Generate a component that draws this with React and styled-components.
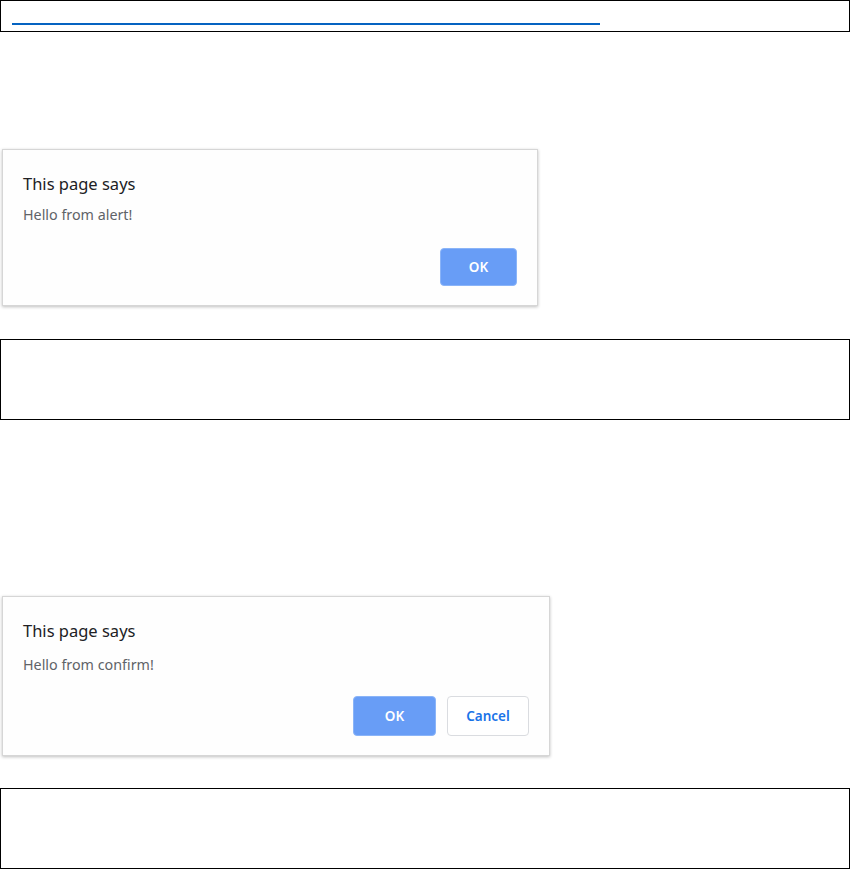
import React from 'react';
import styled, { createGlobalStyle } from 'styled-components';

const Global = createGlobalStyle`
  html, body {
    margin: 0;
    padding: 0;
    background: #ffffff;
  }
  body {
    font-family: "Segoe UI", "Noto Sans", "Open Sans", sans-serif;
  }
`;

const Page = styled.div`
  width: 850px;
  display: flex;
  flex-direction: column;
`;

const Frame = styled.div`
  box-sizing: border-box;
  width: 850px;
  height: ${(p) => p.$height}px;
  margin-top: ${(p) => p.$top || 0}px;
  border: 1px solid #000;
`;

const LinkLine = styled.a`
  display: block;
  width: 588px;
  height: 2px;
  margin-top: 22px;
  margin-left: 11px;
  background: #0563c1;
`;

const Dialog = styled.div`
  box-sizing: border-box;
  width: ${(p) => p.$width}px;
  height: ${(p) => p.$height}px;
  margin-top: ${(p) => p.$top}px;
  margin-left: 2px;
  background: #fefefe;
  border: 1px solid #d6d6d6;
  box-shadow: 0 1px 3px rgba(0, 0, 0, 0.25);
  padding: 22px 20px 19px 20px;
  display: flex;
  flex-direction: column;
`;

const Title = styled.div`
  font-size: 16.5px;
  line-height: 24px;
  color: #202124;
`;

const Message = styled.div`
  margin-top: ${(p) => p.$gap || 10}px;
  font-size: 14.3px;
  line-height: 18px;
  color: #5f6368;
`;

const Actions = styled.div`
  margin-top: auto;
  display: flex;
  justify-content: flex-end;
  gap: 11px;
`;

const Button = styled.button`
  box-sizing: border-box;
  width: ${(p) => p.$width}px;
  height: ${(p) => p.$h || 38}px;
  border-radius: 4px;
  font-family: "Segoe UI", "Noto Sans", "Open Sans", sans-serif;
  font-size: 13.5px;
  font-weight: 600;
  cursor: pointer;
  background: ${(p) => (p.$primary ? '#689df6' : '#ffffff')};
  color: ${(p) => (p.$primary ? '#ffffff' : '#1a73e8')};
  border: 1px solid ${(p) => (p.$primary ? '#8ab4f8' : '#dadce0')};
`;

export default function App() {
  return (
    <Page>
      <Global />
      <Frame $height={32}>
        <LinkLine href="#" aria-label="link" />
      </Frame>

      <Dialog $width={536} $height={157} $top={117}>
        <Title>This page says</Title>
        <Message>Hello from alert!</Message>
        <Actions>
          <Button $primary $width={77}>OK</Button>
        </Actions>
      </Dialog>

      <Frame $height={81} $top={33} />

      <Dialog $width={548} $height={160} $top={176}>
        <Title>This page says</Title>
        <Message $gap={13}>Hello from confirm!</Message>
        <Actions>
          <Button $primary $width={83} $h={40}>OK</Button>
          <Button $width={82} $h={40}>Cancel</Button>
        </Actions>
      </Dialog>

      <Frame $height={81} $top={32} />
    </Page>
  );
}
